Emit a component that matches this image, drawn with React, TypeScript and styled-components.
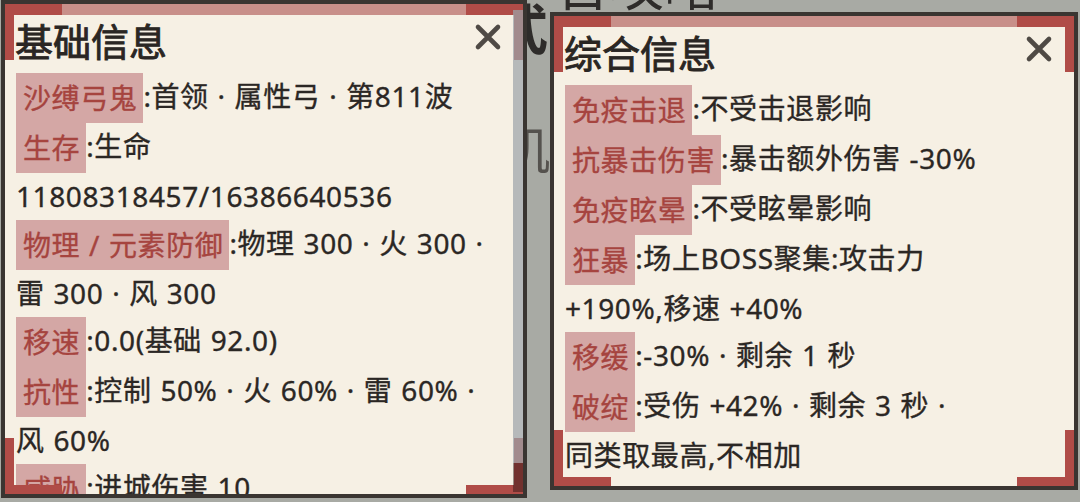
import React from "react";
import styled, { createGlobalStyle } from "styled-components";

const GlobalStyle = createGlobalStyle`
  html, body {
    margin: 0;
    padding: 0;
    background: #a8aaa4;
  }
  body {
    font-family: "Noto Sans", "Noto Sans CJK SC", sans-serif;
  }
`;

const Stage = styled.div`
  position: relative;
  width: 1080px;
  height: 502px;
  overflow: hidden;
  background: #a8aaa4;
`;

// page text of the game screen, peeking out behind the two windows
const Backdrop = styled.div`
  position: absolute;
  inset: 0;
  color: #2e2c2a;
  font-family: "Noto Sans CJK SC", sans-serif;
  pointer-events: none;
`;

const BackHeading = styled.span`
  position: absolute;
  left: 494px;
  top: -8px;
  font-size: 54px;
  line-height: 70px;
  font-weight: 700;
`;

const BackHeadingTail = styled.span`
  position: absolute;
  left: 556px;
  top: -52px;
  font-size: 54px;
  line-height: 70px;
`;

const BackLine = styled.span`
  position: absolute;
  left: 500px;
  top: 112px;
  font-size: 50px;
  line-height: 70px;
  color: #55524e;
`;

const Windows = styled.div`
  position: relative;
  display: flex;
  align-items: flex-start;
  gap: 23px;
  padding-left: 1px;
`;

const Panel = styled.section<{ $width: number; $height: number; $offset: number }>`
  position: relative;
  box-sizing: border-box;
  flex: none;
  width: ${(p) => p.$width}px;
  height: ${(p) => p.$height}px;
  margin-top: ${(p) => p.$offset}px;
  border: 4px solid #3a3531;
  background: #f6f0e4;
  display: flex;
  flex-direction: column;
  overflow: hidden;
`;

const Band = styled.div`
  flex: none;
  height: 11px;
  background: #c88f89;
`;

const Corner = styled.span<{ $top?: boolean; $left?: boolean }>`
  position: absolute;
  box-sizing: border-box;
  width: 57px;
  height: 56px;
  border: 0 solid #b04c47;
  pointer-events: none;
  ${(p) => (p.$top ? "top: 0; border-top-width: 11px;" : "bottom: 0; border-bottom-width: 9px;")}
  ${(p) => (p.$left ? "left: 0; border-left-width: 9px;" : "right: 0; border-right-width: 9px;")}
`;

const ScrollTrack = styled.div`
  position: absolute;
  right: 0;
  top: 6px;
  bottom: 31px;
  width: 10px;
  background: rgba(156, 164, 169, 0.72);
`;

const ScrollThumb = styled.div`
  position: absolute;
  right: 0;
  bottom: 2px;
  width: 10px;
  height: 29px;
  background: rgba(40, 18, 16, 0.45);
`;

const TitleBar = styled.header`
  flex: none;
  display: flex;
  align-items: flex-start;
  justify-content: space-between;
  height: 58px;
  padding: 0 21px 0 10px;
`;

const Title = styled.h2`
  margin: 0;
  font-family: "Noto Sans CJK SC", sans-serif;
  font-size: 38px;
  line-height: 50px;
  font-weight: 400;
  color: #2a2623;
  -webkit-text-stroke: 0.9px #2a2623;
`;

const CloseButton = styled.button`
  margin-top: 8px;
  width: 28px;
  height: 28px;
  padding: 0;
  border: 0;
  background: none;
  display: flex;
`;

const Body = styled.div`
  flex: 1;
  min-height: 0;
  overflow: hidden;
  padding: 0 20px 0 11px;
  font-size: 28px;
  line-height: 47px;
  letter-spacing: 0.6px;
  word-spacing: 1px;
  color: #2b2724;
  -webkit-text-stroke: 0.35px currentColor;
  word-break: keep-all;
`;

const Entry = styled.p`
  margin: 0;
`;

const Tag = styled.span`
  display: inline-block;
  vertical-align: top;
  height: 50px;
  line-height: 50px;
  padding: 0 6px 0 7px;
  background: #d4a7a5;
  color: #a6443f;
`;

function CloseIcon() {
  return (
    <CloseButton aria-label="关闭">
      <svg width="28" height="28" viewBox="0 0 28 28">
        <path
          d="M4 4 L24 24 M24 4 L4 24"
          stroke="#4f4a45"
          strokeWidth="4.6"
          strokeLinecap="round"
          fill="none"
        />
      </svg>
    </CloseButton>
  );
}

interface Row {
  tag: string;
  text: string;
}

// \u2060 keeps "+190%,移速" together the way the game wraps it
const basicRows: Row[] = [
  { tag: "沙缚弓鬼", text: ":首领 · 属性弓 · 第811波" },
  { tag: "生存", text: ":生命 11808318457/16386640536" },
  { tag: "物理 / 元素防御", text: ":物理 300 · 火 300 · 雷 300 · 风 300" },
  { tag: "移速", text: ":0.0(基础 92.0)" },
  { tag: "抗性", text: ":控制 50% · 火 60% · 雷 60% · 风 60%" },
  { tag: "威胁", text: ":进城伤害 10" },
];

const combinedRows: Row[] = [
  { tag: "免疫击退", text: ":不受击退影响" },
  { tag: "抗暴击伤害", text: ":暴击额外伤害 -30%" },
  { tag: "免疫眩晕", text: ":不受眩晕影响" },
  { tag: "狂暴", text: ":场上BOSS聚集:攻击力 +190%,\u2060移速 +40%" },
  { tag: "移缓", text: ":-30% · 剩余 1 秒" },
  { tag: "破绽", text: ":受伤 +42% · 剩余 3 秒 · 同类取最高,\u2060不相加" },
];

interface WindowProps {
  title: string;
  rows: Row[];
  width: number;
  height: number;
  offset: number;
  scroll?: boolean;
}

function InfoWindow({ title, rows, width, height, offset, scroll }: WindowProps) {
  return (
    <Panel $width={width} $height={height} $offset={offset}>
      <Band />
      <TitleBar>
        <Title>{title}</Title>
        <CloseIcon />
      </TitleBar>
      <Body>
        {rows.map((r) => (
          <Entry key={r.tag}>
            <Tag>{r.tag}</Tag>
            {r.text}
          </Entry>
        ))}
      </Body>
      <Corner $top $left />
      <Corner $top />
      <Corner $left />
      <Corner />
      {scroll && (
        <>
          <ScrollTrack />
          <ScrollThumb />
        </>
      )}
    </Panel>
  );
}

export default function App() {
  return (
    <Stage>
      <GlobalStyle />
      <Backdrop>
        <BackHeading>式</BackHeading>
        <BackHeadingTail>台攻略</BackHeadingTail>
        <BackLine>机</BackLine>
      </Backdrop>
      <Windows>
        <InfoWindow title="基础信息" rows={basicRows} width={526} height={498} offset={0} scroll />
        <InfoWindow title="综合信息" rows={combinedRows} width={528} height={478} offset={12} />
      </Windows>
    </Stage>
  );
}
